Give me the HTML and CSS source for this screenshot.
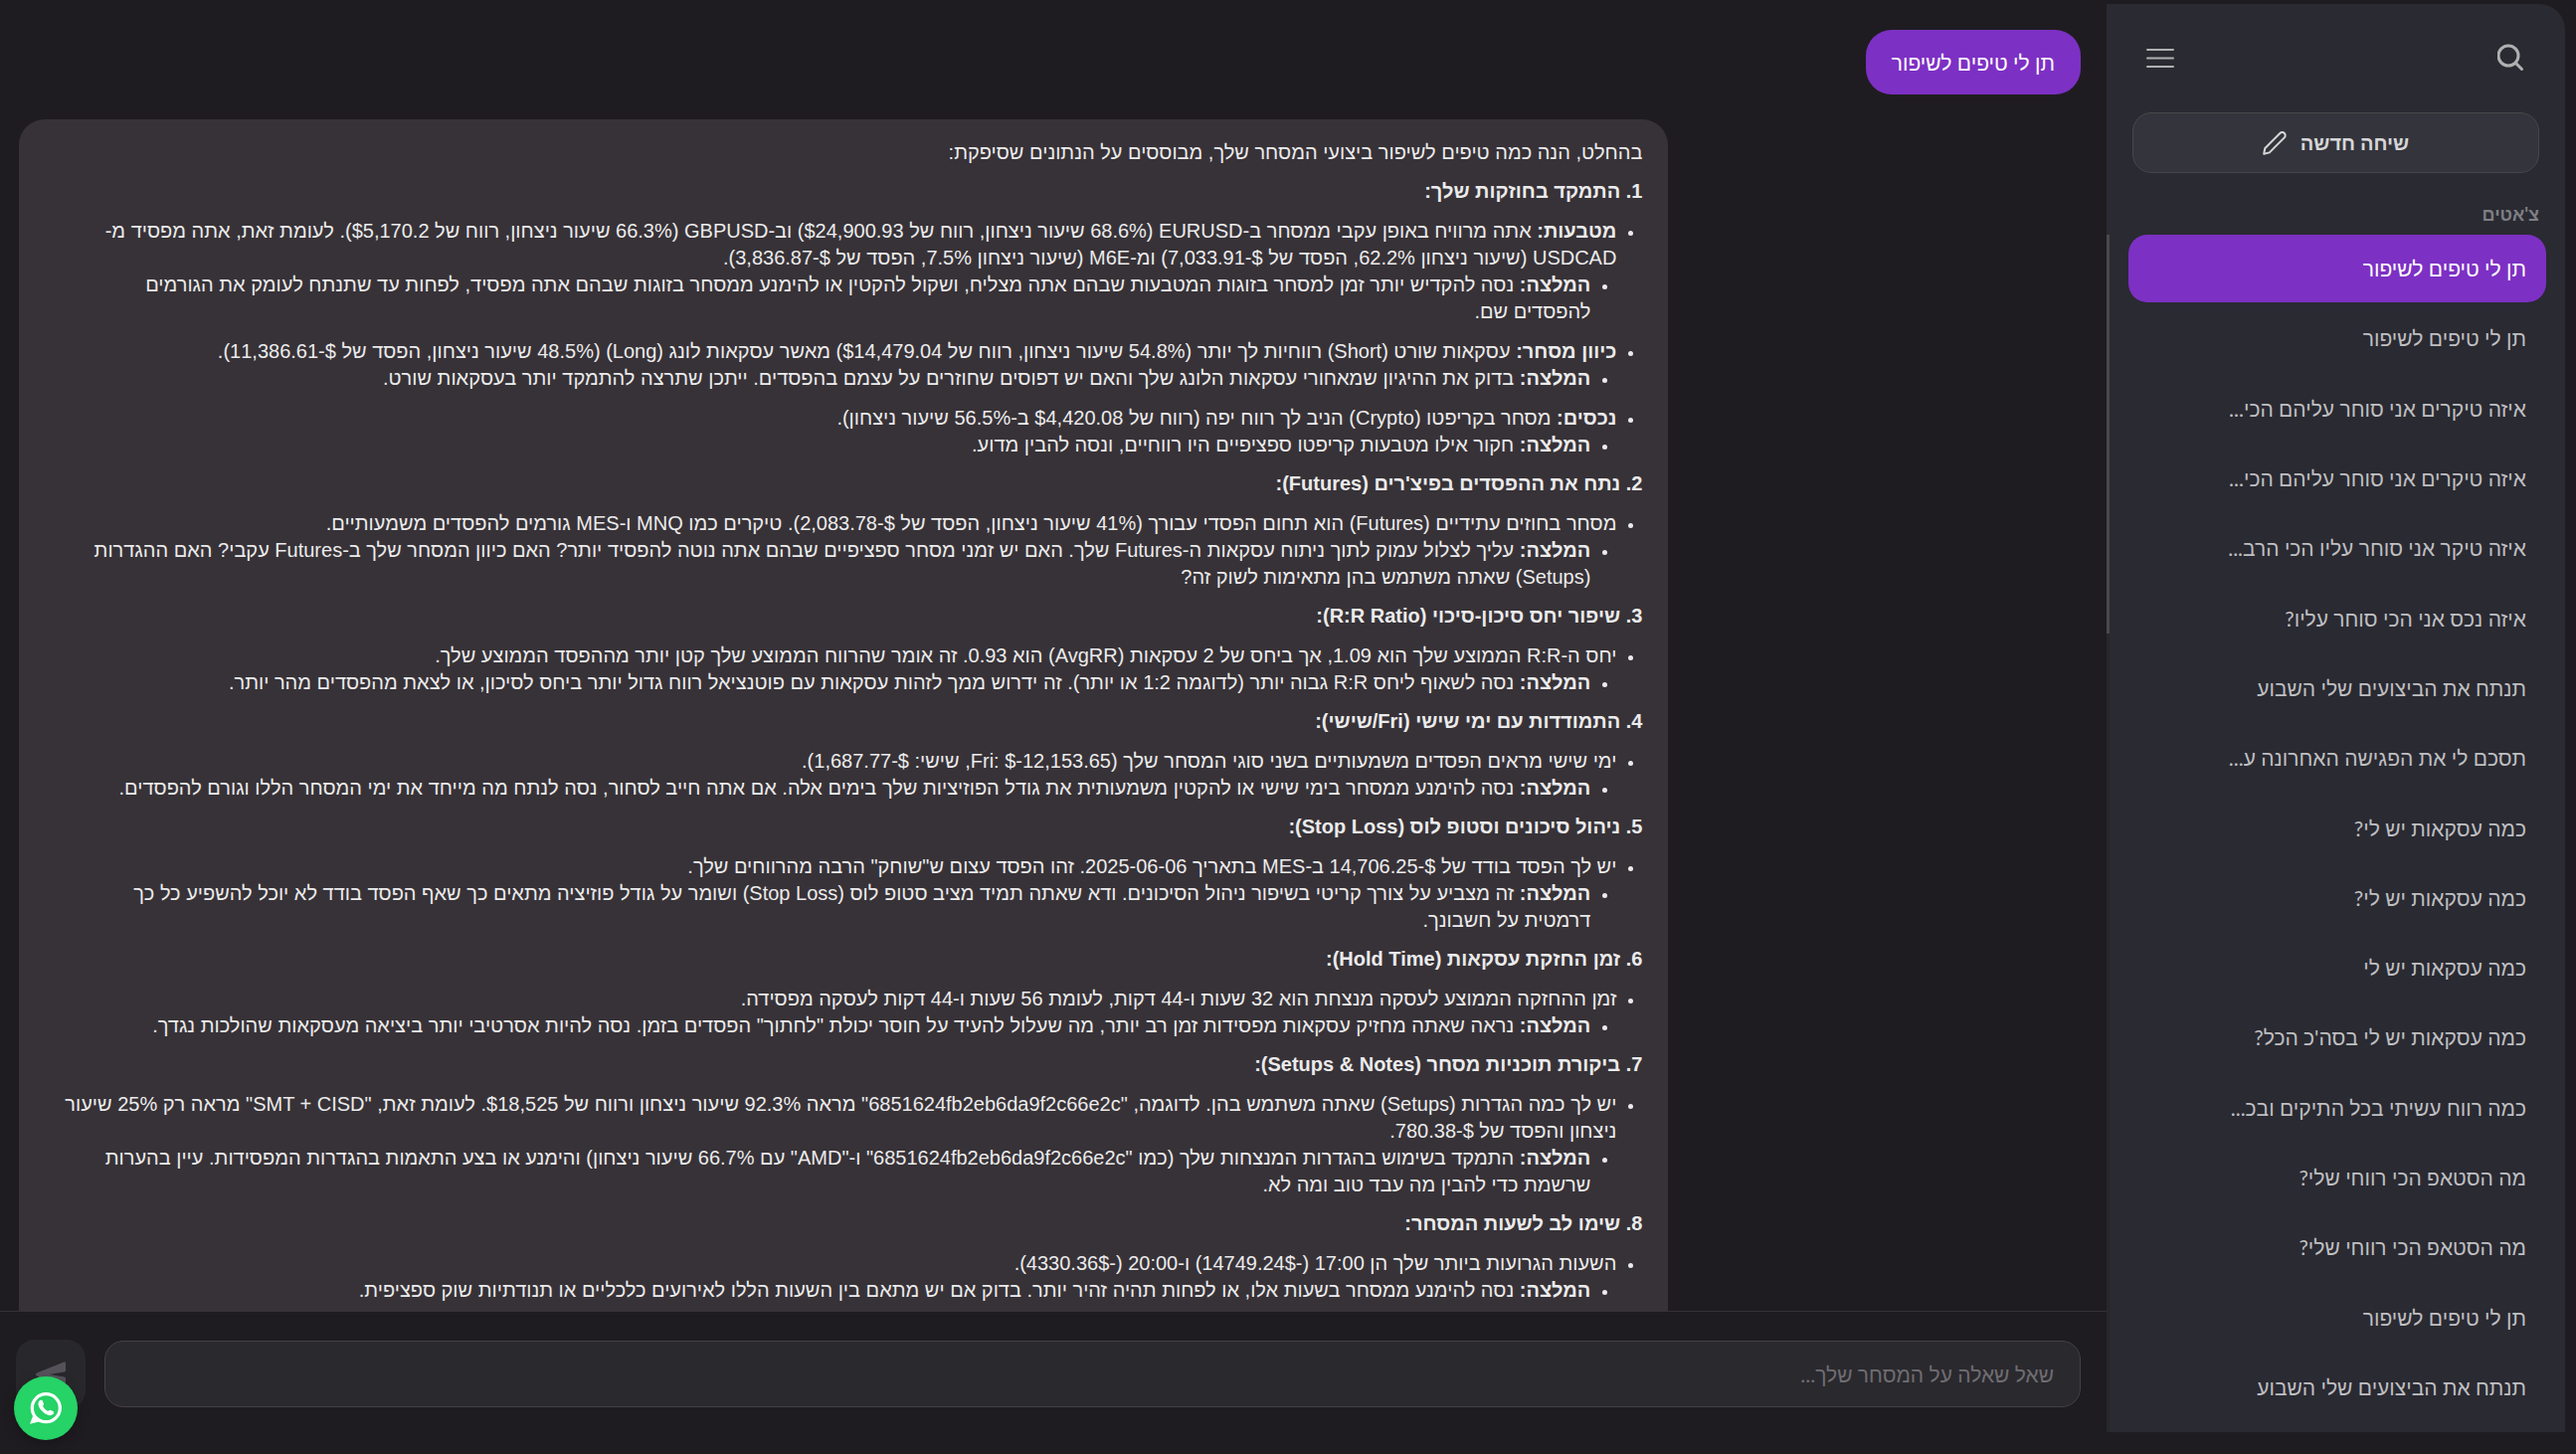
FILE: index.html
```html
<!doctype html>
<html lang="he" dir="rtl">
  <head>
    <meta charset="UTF-8" />
    <meta name="viewport" content="width=device-width, initial-scale=1.0" />
    <title>צ'אט מסחר</title>
    <link rel="stylesheet" href="styles.css">
  </head>
  <body>
    <aside class="sidebar">
      <div class="sidebar-top">
        <button class="icon-btn" aria-label="חיפוש">
          <svg width="28" height="28" viewBox="0 0 28 28" fill="none" stroke="currentColor" stroke-width="3" stroke-linecap="round">
            <circle cx="11" cy="12" r="10" />
            <path d="M18.5 19.5L24.5 25.5" />
          </svg>
        </button>
        <button class="icon-btn" aria-label="תפריט">
          <svg width="28" height="28" viewBox="0 0 28 28" fill="none" stroke="currentColor" stroke-width="2" stroke-linecap="round">
            <path d="M1 6h26M1 14.5h26M1 23h26" />
          </svg>
        </button>
      </div>

      <button class="new-chat">
        שיחה חדשה
        <svg width="24" height="24" viewBox="0 0 24 24" fill="none" stroke="currentColor" stroke-width="2" stroke-linejoin="round">
          <path d="M1.2 22.8L2.2 17.2L17.4 2A3 3 0 0 1 21.8 6.4L6.8 21.4Z" />
        </svg>
      </button>

      <h2 class="list-title">צ'אטים</h2>
      <nav class="chat-list">
        <a class="chat-item active" href="#">תן לי טיפים לשיפור</a>
        <a class="chat-item" href="#">תן לי טיפים לשיפור</a>
        <a class="chat-item" href="#">איזה טיקרים אני סוחר עליהם הכי...</a>
        <a class="chat-item" href="#">איזה טיקרים אני סוחר עליהם הכי...</a>
        <a class="chat-item" href="#">איזה טיקר אני סוחר עליו הכי הרב...</a>
        <a class="chat-item" href="#">איזה נכס אני הכי סוחר עליו?</a>
        <a class="chat-item" href="#">תנתח את הביצועים שלי השבוע</a>
        <a class="chat-item" href="#">תסכם לי את הפגישה האחרונה ע...</a>
        <a class="chat-item" href="#">כמה עסקאות יש לי?</a>
        <a class="chat-item" href="#">כמה עסקאות יש לי?</a>
        <a class="chat-item" href="#">כמה עסקאות יש לי</a>
        <a class="chat-item" href="#">כמה עסקאות יש לי בסה'כ הכל?</a>
        <a class="chat-item" href="#">כמה רווח עשיתי בכל התיקים ובכ...</a>
        <a class="chat-item" href="#">מה הסטאפ הכי רווחי שלי?</a>
        <a class="chat-item" href="#">מה הסטאפ הכי רווחי שלי?</a>
        <a class="chat-item" href="#">תן לי טיפים לשיפור</a>
        <a class="chat-item" href="#">תנתח את הביצועים שלי השבוע</a>
      </nav>
    </aside>

    <main class="chat">
      <div class="messages">
        <div class="message user">תן לי טיפים לשיפור</div>

        <div class="message bot">
          <p>בהחלט, הנה כמה טיפים לשיפור ביצועי המסחר שלך, מבוססים על הנתונים שסיפקת:</p>

          <h3>1. התמקד בחוזקות שלך:</h3>
          <ul>
            <li><strong>מטבעות:</strong> אתה מרוויח באופן עקבי ממסחר ב-EURUSD (68.6% שיעור ניצחון, רווח של $24,900.93) וב-GBPUSD (66.3% שיעור ניצחון, רווח של $5,170.2). לעומת זאת, אתה מפסיד מ-<br>USDCAD (שיעור ניצחון 62.2%, הפסד של $-7,033.91) ומ-M6E (שיעור ניצחון 7.5%, הפסד של $-3,836.87).
              <ul>
                <li><strong>המלצה:</strong> נסה להקדיש יותר זמן למסחר בזוגות המטבעות שבהם אתה מצליח, ושקול להקטין או להימנע ממסחר בזוגות שבהם אתה מפסיד, לפחות עד שתנתח לעומק את הגורמים<br>להפסדים שם.</li>
              </ul>
            </li>
            <li><strong>כיוון מסחר:</strong> עסקאות שורט (Short) רווחיות לך יותר (54.8% שיעור ניצחון, רווח של $14,479.04) מאשר עסקאות לונג (Long) (48.5% שיעור ניצחון, הפסד של $-11,386.61).
              <ul>
                <li><strong>המלצה:</strong> בדוק את ההיגיון שמאחורי עסקאות הלונג שלך והאם יש דפוסים שחוזרים על עצמם בהפסדים. ייתכן שתרצה להתמקד יותר בעסקאות שורט.</li>
              </ul>
            </li>
            <li><strong>נכסים:</strong> מסחר בקריפטו (Crypto) הניב לך רווח יפה (רווח של $4,420.08 ב-56.5% שיעור ניצחון).
              <ul>
                <li><strong>המלצה:</strong> חקור אילו מטבעות קריפטו ספציפיים היו רווחיים, ונסה להבין מדוע.</li>
              </ul>
            </li>
          </ul>

          <h3>2. נתח את ההפסדים בפיצ'רים (Futures):</h3>
          <ul>
            <li>מסחר בחוזים עתידיים (Futures) הוא תחום הפסדי עבורך (41% שיעור ניצחון, הפסד של $-2,083.78). טיקרים כמו MNQ ו-MES גורמים להפסדים משמעותיים.
              <ul>
                <li><strong>המלצה:</strong> עליך לצלול עמוק לתוך ניתוח עסקאות ה-Futures שלך. האם יש זמני מסחר ספציפיים שבהם אתה נוטה להפסיד יותר? האם כיוון המסחר שלך ב-Futures עקבי? האם ההגדרות (Setups) שאתה משתמש בהן מתאימות לשוק זה?</li>
              </ul>
            </li>
          </ul>

          <h3>3. שיפור יחס סיכון-סיכוי (R:R Ratio):</h3>
          <ul>
            <li>יחס ה-R:R הממוצע שלך הוא 1.09, אך ביחס של 2 עסקאות (AvgRR) הוא 0.93. זה אומר שהרווח הממוצע שלך קטן יותר מההפסד הממוצע שלך.
              <ul>
                <li><strong>המלצה:</strong> נסה לשאוף ליחס R:R גבוה יותר (לדוגמה 1:2 או יותר). זה ידרוש ממך לזהות עסקאות עם פוטנציאל רווח גדול יותר ביחס לסיכון, או לצאת מהפסדים מהר יותר.</li>
              </ul>
            </li>
          </ul>

          <h3>4. התמודדות עם ימי שישי (Fri/שישי):</h3>
          <ul>
            <li>ימי שישי מראים הפסדים משמעותיים בשני סוגי המסחר שלך (Fri: $-12,153.65, שישי: $-1,687.77).
              <ul>
                <li><strong>המלצה:</strong> נסה להימנע ממסחר בימי שישי או להקטין משמעותית את גודל הפוזיציות שלך בימים אלה. אם אתה חייב לסחור, נסה לנתח מה מייחד את ימי המסחר הללו וגורם להפסדים.</li>
              </ul>
            </li>
          </ul>

          <h3>5. ניהול סיכונים וסטופ לוס (Stop Loss):</h3>
          <ul>
            <li>יש לך הפסד בודד של $-14,706.25 ב-MES בתאריך 2025-06-06. זהו הפסד עצום ש"שוחק" הרבה מהרווחים שלך.
              <ul>
                <li><strong>המלצה:</strong> זה מצביע על צורך קריטי בשיפור ניהול הסיכונים. ודא שאתה תמיד מציב סטופ לוס (Stop Loss) ושומר על גודל פוזיציה מתאים כך שאף הפסד בודד לא יוכל להשפיע כל כך<br>דרמטית על חשבונך.</li>
              </ul>
            </li>
          </ul>

          <h3>6. זמן החזקת עסקאות (Hold Time):</h3>
          <ul>
            <li>זמן ההחזקה הממוצע לעסקה מנצחת הוא 32 שעות ו-44 דקות, לעומת 56 שעות ו-44 דקות לעסקה מפסידה.
              <ul>
                <li><strong>המלצה:</strong> נראה שאתה מחזיק עסקאות מפסידות זמן רב יותר, מה שעלול להעיד על חוסר יכולת "לחתוך" הפסדים בזמן. נסה להיות אסרטיבי יותר ביציאה מעסקאות שהולכות נגדך.</li>
              </ul>
            </li>
          </ul>

          <h3>7. ביקורת תוכניות מסחר (Setups &amp; Notes):</h3>
          <ul>
            <li>יש לך כמה הגדרות (Setups) שאתה משתמש בהן. לדוגמה, "6851624fb2eb6da9f2c66e2c" מראה 92.3% שיעור ניצחון ורווח של $18,525. לעומת זאת, "SMT + CISD" מראה רק 25% שיעור ניצחון והפסד של $-780.38.
              <ul>
                <li><strong>המלצה:</strong> התמקד בשימוש בהגדרות המנצחות שלך (כמו "6851624fb2eb6da9f2c66e2c" ו-"AMD" עם 66.7% שיעור ניצחון) והימנע או בצע התאמות בהגדרות המפסידות. עיין בהערות שרשמת כדי להבין מה עבד טוב ומה לא.</li>
              </ul>
            </li>
          </ul>

          <h3>8. שימו לב לשעות המסחר:</h3>
          <ul>
            <li>השעות הגרועות ביותר שלך הן 17:00 (-14749.24$) ו-20:00 (-4330.36$).
              <ul>
                <li><strong>המלצה:</strong> נסה להימנע ממסחר בשעות אלו, או לפחות תהיה זהיר יותר. בדוק אם יש מתאם בין השעות הללו לאירועים כלכליים או תנודתיות שוק ספציפית.</li>
              </ul>
            </li>
          </ul>
        </div>
      </div>

      <form class="composer">
        <input class="composer-input" type="text" aria-label="שאלה" placeholder="שאל שאלה על המסחר שלך..." />
        <button class="send-btn" type="button" aria-label="שליחה">
          <svg width="30" height="26" viewBox="0 0 30 26" fill="currentColor">
            <path d="M30 1.6Q30 0 28.4 .5L1.4 11.2Q0 12 0 13Q0 14 1.4 14.8L28.4 25.5Q30 26 30 24.4V17Q30 15.6 28.6 15.4L14 13L28.6 10.6Q30 10.4 30 9Z" />
          </svg>
        </button>
      </form>
    </main>

    <a class="whatsapp" href="#" aria-label="WhatsApp">
      <svg width="32" height="32" viewBox="0 0 32 32">
        <path d="M4.6 22.5L1.6 30.4L10 28.2" fill="#fff" stroke="#fff" stroke-width="2" />
        <circle cx="16.3" cy="15.7" r="14" fill="#25d366" stroke="#fff" stroke-width="3.2" />
        <path d="M9.5 8.6C10.5 7.4 12.4 7.6 13 9L13.9 11.4C14.2 12.4 13 13.4 13.2 14C14 16 16 18 18 18.8C18.7 19 19.6 17.6 20.5 17.8L23.2 19C24.4 19.6 24.4 21 23.4 22C21 24 17.5 23.4 13.5 20C9.5 16.6 7 11.8 9.5 8.6Z" fill="#fff" />
      </svg>
    </a>
  </body>
</html>
```
FILE: styles.css
```css
* {
  box-sizing: border-box;
}
body {
  font-family: Lato, 'Liberation Sans', sans-serif;
  font-size: 21px;
  line-height: 27px;
  display: flex;
  margin: 0;
  height: 100vh;
  overflow: hidden;
  background-color: #1f1c21;
  color: #ebebec;
}
button,
input {
  font: inherit;
}
.sidebar {
  position: relative;
  flex: none;
  width: 461px;
  margin: 4px 11px 22px 0;
  padding: 0 26px;
  display: flex;
  flex-direction: column;
  background-color: #2a2a32;
  border-top-right-radius: 26px;
}
/* scrollbar of the chat list */
.sidebar::after {
  content: '';
  position: absolute;
  left: 0;
  top: 232px;
  bottom: 0;
  width: 3px;
  background: linear-gradient(#4a4a4a 401px, #27282c 401px);
}
.sidebar-top {
  display: flex;
  justify-content: space-between;
  padding: 32px 6px 30px;
}
.icon-btn {
  display: flex;
  padding: 8px;
  border: none;
  background: none;
  color: #b0b0b2;
  cursor: pointer;
}
.new-chat {
  display: flex;
  justify-content: center;
  align-items: center;
  gap: 14px;
  height: 61px;
  margin-top: 3px;
  border: 1px solid #47474a;
  border-radius: 19px;
  background-color: #34343c;
  color: #d6d6d8;
  font-size: 20px;
  font-weight: 700;
  cursor: pointer;
}
.list-title {
  margin: 28px 0 7px;
  font-size: 18px;
  font-weight: 700;
  color: #7f7f84;
}
.chat-list {
  flex: 1;
  margin: 0 -7px 0 -4px;
  padding-bottom: 11px;
  display: flex;
  flex-direction: column;
  justify-content: space-between;
}
.chat-item {
  padding: 20px;
  line-height: 28px;
  border-radius: 19px;
  color: #bfbfc1;
  text-decoration: none;
  white-space: nowrap;
}
.chat-item.active {
  background-color: #7d30c4;
  color: #fff;
}
.chat {
  flex: 1;
  min-width: 0;
  display: flex;
  flex-direction: column;
}
.messages {
  flex: 1;
  min-height: 0;
  overflow: hidden;
  display: flex;
  flex-direction: column;
  gap: 25px;
  padding: 30px 26px 0 19px;
}
.message {
  flex: none;
  padding: 19px 26px;
  border-radius: 26px;
}
.message.user {
  align-self: flex-start;
  background-color: #7d30c4;
  color: #fff;
}
.message.bot {
  align-self: flex-end;
  width: 80%;
  padding-top: 20px;
  font-family: 'Liberation Sans', sans-serif;
  font-size: 20px;
  background-color: #373237;
}
.bot p,
.bot h3 {
  margin: 0 0 12px;
}
.bot h3 {
  margin-bottom: 13px;
  font-size: 20px;
  font-weight: 700;
}
.bot strong {
  font-weight: 700;
}
.bot ul {
  margin: 0;
  padding-right: 26px;
  list-style: none;
}
.bot > ul {
  margin-bottom: 12px;
}
.bot li {
  position: relative;
}
.bot li + li {
  margin-top: 13px;
}
.bot li::before {
  content: '';
  position: absolute;
  right: -17px;
  top: 13px;
  width: 5px;
  height: 5px;
  border-radius: 50%;
  background-color: #ebebec;
}
.composer {
  display: flex;
  align-items: center;
  gap: 19px;
  height: 144px;
  padding: 0 26px 18px 16px;
  border-top: 1px solid #343137;
}
.composer-input {
  flex: 1;
  height: 67px;
  padding: 0 26px;
  border: 1px solid #434047;
  border-radius: 19px;
  background-color: #2a292e;
  color: #ebebec;
}
.composer-input::placeholder {
  color: #6f6d72;
  opacity: 1;
}
.send-btn {
  display: flex;
  justify-content: center;
  align-items: center;
  width: 70px;
  height: 70px;
  padding: 0;
  border: none;
  border-radius: 19px;
  background-color: #28272c;
  color: #56525a;
}
.whatsapp {
  position: fixed;
  left: 14px;
  bottom: 14px;
  width: 64px;
  height: 64px;
  display: flex;
  justify-content: center;
  align-items: center;
  border-radius: 50%;
  background-color: #25d366;
  box-shadow: 0 4px 12px rgba(0, 0, 0, 0.25);
}
```
